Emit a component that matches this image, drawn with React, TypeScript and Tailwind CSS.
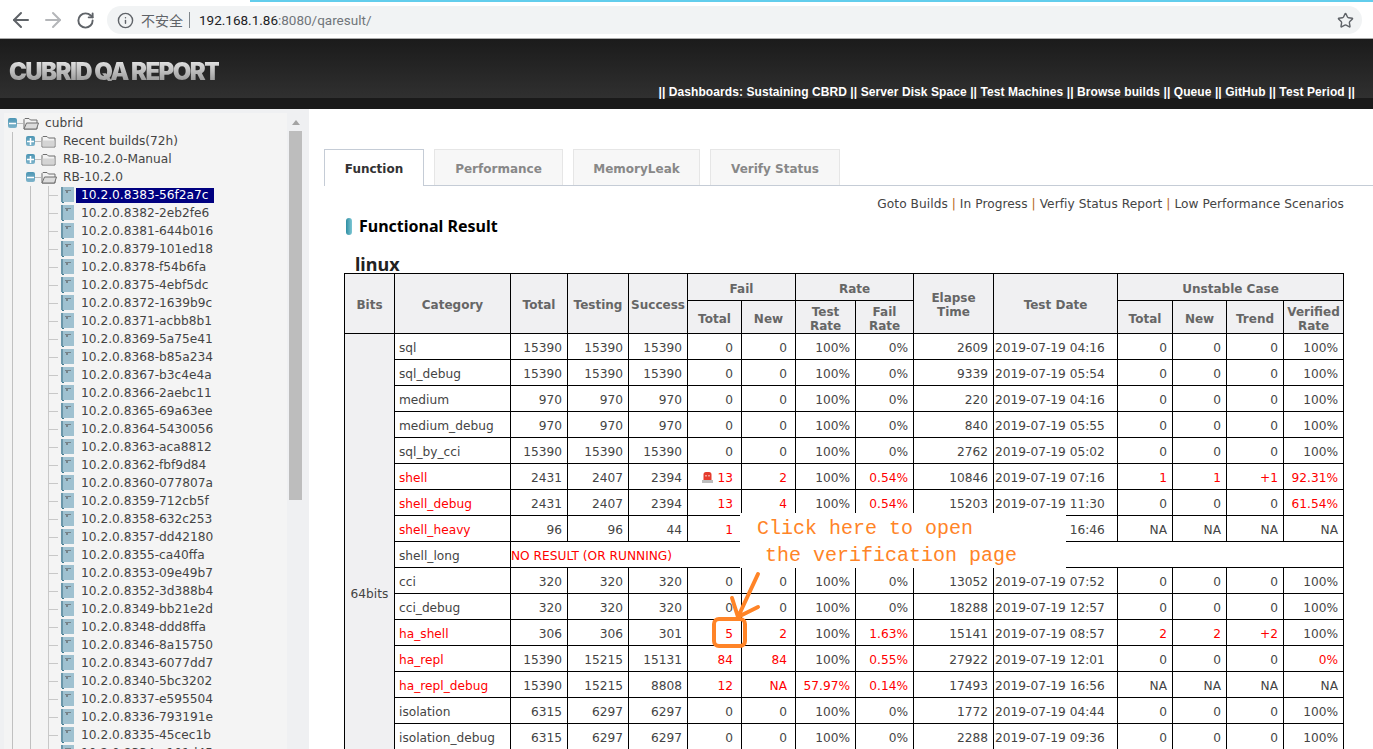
import { ArrowLeft, ArrowRight, Info, RotateCw, Star } from "lucide-react";

const builds = [
  "8382-2eb2fe6", "8381-644b016", "8379-101ed18", "8378-f54b6fa", "8375-4ebf5dc", "8372-1639b9c",
  "8371-acbb8b1", "8369-5a75e41", "8368-b85a234", "8367-b3c4e4a", "8366-2aebc11", "8365-69a63ee",
  "8364-5430056", "8363-aca8812", "8362-fbf9d84", "8360-077807a", "8359-712cb5f", "8358-632c253",
  "8357-dd42180", "8355-ca40ffa", "8353-09e49b7", "8352-3d388b4", "8349-bb21e2d", "8348-ddd8ffa",
  "8346-8a15750", "8343-6077dd7", "8340-5bc3202", "8337-e595504", "8336-793191e", "8335-45cec1b",
  "8334-a101d45",
];

// category, total, testing, success, fail total, fail new, test rate, fail rate, elapse, date, unstable total, new, trend, verified
const rows: string[][] = [
  ["sql", "15390", "15390", "15390", "0", "0", "100%", "0%", "2609", "2019-07-19 04:16", "0", "0", "0", "100%"],
  ["sql_debug", "15390", "15390", "15390", "0", "0", "100%", "0%", "9339", "2019-07-19 05:54", "0", "0", "0", "100%"],
  ["medium", "970", "970", "970", "0", "0", "100%", "0%", "220", "2019-07-19 04:16", "0", "0", "0", "100%"],
  ["medium_debug", "970", "970", "970", "0", "0", "100%", "0%", "840", "2019-07-19 05:55", "0", "0", "0", "100%"],
  ["sql_by_cci", "15390", "15390", "15390", "0", "0", "100%", "0%", "2762", "2019-07-19 05:02", "0", "0", "0", "100%"],
  ["shell", "2431", "2407", "2394", "13", "2", "100%", "0.54%", "10846", "2019-07-19 07:16", "1", "1", "+1", "92.31%"],
  ["shell_debug", "2431", "2407", "2394", "13", "4", "100%", "0.54%", "15203", "2019-07-19 11:30", "0", "0", "0", "61.54%"],
  ["shell_heavy", "96", "96", "44", "1", "", "", "", "", "2019-07-19 16:46", "NA", "NA", "NA", "NA"],
  ["shell_long"],
  ["cci", "320", "320", "320", "0", "0", "100%", "0%", "13052", "2019-07-19 07:52", "0", "0", "0", "100%"],
  ["cci_debug", "320", "320", "320", "0", "0", "100%", "0%", "18288", "2019-07-19 12:57", "0", "0", "0", "100%"],
  ["ha_shell", "306", "306", "301", "5", "2", "100%", "1.63%", "15141", "2019-07-19 08:57", "2", "2", "+2", "100%"],
  ["ha_repl", "15390", "15215", "15131", "84", "84", "100%", "0.55%", "27922", "2019-07-19 12:01", "0", "0", "0", "0%"],
  ["ha_repl_debug", "15390", "15215", "8808", "12", "NA", "57.97%", "0.14%", "17493", "2019-07-19 16:56", "NA", "NA", "NA", "NA"],
  ["isolation", "6315", "6297", "6297", "0", "0", "100%", "0%", "1772", "2019-07-19 04:44", "0", "0", "0", "100%"],
  ["isolation_debug", "6315", "6297", "6297", "0", "0", "100%", "0%", "2288", "2019-07-19 09:36", "0", "0", "0", "100%"],
];

const redCats = ["shell", "shell_debug", "shell_heavy", "ha_shell", "ha_repl", "ha_repl_debug"];
const colWidths = [50, 116, 57, 61, 59, 54, 54, 60, 58, 80, 124, 55, 54, 57, 60];

function isRed(col: number, row: string[]) {
  const v = row[col];
  if (col === 4 || col === 5) return v !== "0";
  if (col === 6) return v !== "100%";
  if (col === 7) return v !== "0%";
  if (col >= 10 && col <= 12) return v !== "0" && v !== "NA";
  if (col === 13) return v !== "100%" && v !== "NA";
  return false;
}

function FolderIcon({ open }: { open?: boolean }) {
  return (
    <svg width="16" height="13" viewBox="0 0 16 13" className="shrink-0">
      <path d="M1 12V2.5L2 1.5H6L7.5 3H14V12Z" fill="#f2f2f2" stroke="#6f6f6f" />
      {open ? (
        <path d="M1 12L3.5 6H15.5L13.5 12Z" fill="#dcdcdc" stroke="#6f6f6f" />
      ) : (
        <path d="M1.5 5.5H13.5V11.5H1.5Z" fill="#d4d4d4" />
      )}
    </svg>
  );
}

function BookIcon() {
  return (
    <svg width="13" height="16" viewBox="0 0 13 16" className="shrink-0">
      <rect x="0" y="0" width="13" height="15" fill="#9fc1d0" />
      <rect x="0" y="0" width="2" height="15" fill="#6b97aa" />
      <rect x="4" y="3" width="6" height="1" fill="#75838a" />
      <rect x="5" y="4" width="2" height="2" fill="#75838a" />
      <rect x="1" y="15" width="2" height="1" fill="#3f7a90" />
    </svg>
  );
}

function Toggle({ plus }: { plus?: boolean }) {
  return (
    <span className="flex h-[10px] w-[9px] shrink-0 items-center justify-center rounded-[2px] bg-gradient-to-b from-[#4d96b4] to-[#7fb4cb]">
      <svg width="7" height="7" viewBox="0 0 7 7">
        <path d={plus ? "M0 3.5H7M3.5 0V7" : "M0 3.5H7"} stroke="#fff" strokeWidth="1.5" />
      </svg>
    </span>
  );
}

function Tree() {
  return (
    <div className="flex h-full w-[283px] flex-col bg-[#f4f4f4] pt-px text-[12.2px] text-[#444]">
      <div className="flex h-[18px] shrink-0 items-center">
        <span className="ml-[4px]"><Toggle /></span>
        <span className="h-px w-[6px] bg-[#bdbdbd]" />
        <FolderIcon open />
        <span className="ml-[6px]">cubrid</span>
      </div>
      {[
        ["Recent builds(72h)", true],
        ["RB-10.2.0-Manual", true],
        ["RB-10.2.0", false],
      ].map(([label, plus]) => (
        <div key={label as string} className="flex h-[18px] shrink-0 items-center">
          <span className="ml-[8px] h-full w-[9px] border-l border-[#c0c0c0]" />
          <span className="ml-[5px]"><Toggle plus={plus as boolean} /></span>
          <span className="h-px w-[6px] bg-[#bdbdbd]" />
          <FolderIcon open={!plus} />
          <span className="ml-[6px]">{label}</span>
        </div>
      ))}
      <Leaf label="8383-56f2a7c" active />
      {builds.map((b) => (
        <Leaf key={b} label={b} />
      ))}
    </div>
  );
}

function Leaf({ label, active }: { label: string; active?: boolean }) {
  return (
    <div className="flex h-[18px] shrink-0 items-center">
      <span className="ml-[8px] h-full w-[18px] border-l border-[#c0c0c0]" />
      <span className="h-full w-[18px] border-l border-[#c0c0c0]" />
      <span className="flex h-full w-[10px] items-center border-l border-[#c8c8c8]">
        <span className="h-px w-full bg-[#c8c8c8]" />
      </span>
      <span className="ml-[3px]"><BookIcon /></span>
      <span
        className={`ml-[2px] flex h-[15px] items-center px-[5px] ${
          active ? "w-[138px] bg-[#000080] text-white" : ""
        }`}
      >
        10.2.0.{label}
      </span>
    </div>
  );
}

function Alarm() {
  return (
    <svg width="11" height="12" viewBox="0 0 11 12" className="mr-[4px] inline-block align-[-1px]">
      <path d="M1.5 9V3.5A2.5 2.5 0 0 1 4 1H7A2.5 2.5 0 0 1 9.5 3.5V9Z" fill="#e53b2d" />
      <rect x="0" y="9" width="11" height="3" fill="#bdbdbd" />
      <rect x="3.5" y="4" width="1" height="1.5" fill="#fff" />
      <rect x="6.5" y="4" width="1" height="1.5" fill="#fff" />
    </svg>
  );
}

function ResultTable() {
  const th = "border border-black bg-[#f0f0f2] p-0 pt-[3px] text-center align-middle text-[12px] font-bold leading-[14px] text-[#666]";
  const td = "border border-black pr-[5px] pt-[3px] text-right";
  return (
    <table className="w-[999px] table-fixed border-collapse text-[12.2px] leading-[15px] text-[#444]">
      <colgroup>
        {colWidths.map((w, i) => (
          <col key={i} style={{ width: w }} />
        ))}
      </colgroup>
      <thead>
        <tr className="h-[27px]">
          <th rowSpan={2} className={th}>Bits</th>
          <th rowSpan={2} className={th}>Category</th>
          <th rowSpan={2} className={th}>Total</th>
          <th rowSpan={2} className={th}>Testing</th>
          <th rowSpan={2} className={th}>Success</th>
          <th colSpan={2} className={th}>Fail</th>
          <th colSpan={2} className={th}>Rate</th>
          <th rowSpan={2} className={th}>Elapse<br />Time</th>
          <th rowSpan={2} className={th}>Test Date</th>
          <th colSpan={4} className={th}>Unstable Case</th>
        </tr>
        <tr className="h-[33px]">
          <th className={th}>Total</th>
          <th className={th}>New</th>
          <th className={th}>Test<br />Rate</th>
          <th className={th}>Fail<br />Rate</th>
          <th className={th}>Total</th>
          <th className={th}>New</th>
          <th className={th}>Trend</th>
          <th className={th}>Verified<br />Rate</th>
        </tr>
      </thead>
      <tbody>
        {rows.map((row, r) => (
          <tr key={row[0]} className="h-[26px]">
            {r === 0 && (
              <td rowSpan={16} className="border border-black bg-[#f0f0f2] pt-[106px] text-center">64bits</td>
            )}
            <td className={`border border-black pl-[4px] pt-[3px] ${redCats.includes(row[0]) ? "text-[#f00]" : ""}`}>{row[0]}</td>
            {row.length === 1 ? (
              <td colSpan={13} className="border border-black pt-[3px] text-[#f00]">NO RESULT (OR RUNNING)</td>
            ) : (
              row.slice(1).map((v, i) => {
                const col = i + 1;
                if (col === 9) {
                  return <td key={col} className="whitespace-nowrap border border-black pl-px pt-[3px]">{v}</td>;
                }
                const pad = col === 4 || col === 5 ? "pr-[8px]" : "";
                return (
                  <td key={col} className={`${td} ${pad} ${isRed(col, row) ? "text-[#f00]" : ""}`}>
                    {row[0] === "shell" && col === 4 && <Alarm />}
                    {v}
                  </td>
                );
              })
            )}
          </tr>
        ))}
      </tbody>
    </table>
  );
}

function Callout() {
  return (
    <>
      <div className="absolute left-[740px] top-[513px] flex h-[55px] w-[326px] flex-col bg-white pt-[2px] font-['Liberation_Mono',monospace] text-[20px] leading-[27px] text-[#ff8427]">
        <span className="whitespace-pre pl-[17px]">Click here to open</span>
        <span className="whitespace-pre pl-[25px]">the verification page</span>
      </div>
      <svg className="pointer-events-none absolute left-[705px] top-[565px]" width="60" height="90" viewBox="705 565 60 90">
        <rect x="714" y="619" width="31" height="27" rx="5" fill="none" stroke="#ff8427" strokeWidth="4" />
        <path d="M758 574L738 617M732 598L738 617L758 607" fill="none" stroke="#ff8427" strokeWidth="4" strokeLinecap="round" />
      </svg>
    </>
  );
}

export default function App() {
  const tabs = ["Performance", "MemoryLeak", "Verify Status"];
  const tabWidths = ["w-[129px]", "w-[127px]", "w-[130px]"];
  const links = ["Goto Builds", "In Progress", "Verfiy Status Report", "Low Performance Scenarios"];
  return (
    <div className="relative flex h-[749px] w-[1373px] flex-col overflow-hidden bg-white font-['DejaVu_Sans',sans-serif]">
      {/* browser chrome */}
      <div className="h-[39px] shrink-0 border-b border-[#a9a9a9] bg-white">
        <div className="ml-[250px] h-[2px] bg-[#62cdec]" />
        <div className="flex h-[36px] items-center pl-[9px] pr-[11px]">
          <ArrowLeft size={24} strokeWidth={2} className="text-[#5f6368]" />
          <ArrowRight size={24} strokeWidth={2} className="ml-[8px] text-[#b4b6b9]" />
          <RotateCw size={19} strokeWidth={2.4} className="ml-[11px] text-[#5f6368]" />
          <div className="ml-[12px] flex h-[28px] flex-1 items-center rounded-full bg-[#f1f3f4] pl-[10px] pr-[8px] font-['Roboto',sans-serif] text-[13.5px]">
            <Info size={17} className="text-[#5f6368]" />
            <span className="ml-[7px] font-['Noto_Sans_CJK_SC',sans-serif] text-[14px] text-[#5f6368]">不安全</span>
            <span className="ml-[6px] h-[16px] w-px bg-[#80868b]" />
            <span className="ml-[9px] text-[#202124]">192.168.1.86<span className="text-[#70757a]">:8080/qaresult/</span></span>
            <Star size={17} className="ml-auto text-[#5f6368]" />
          </div>
        </div>
      </div>

      {/* site header */}
      <div className="h-[70px] shrink-0 bg-[#1a1a1a]">
        <div className="flex h-[59px] items-start justify-between bg-gradient-to-b from-[#1b1b1b] to-[#303030] pl-[9px] pr-[18px]">
          <span className="mt-[19px] bg-gradient-to-b from-[#eeeeee] to-[#8a8a8a] bg-clip-text font-['Inter',sans-serif] text-[24px] font-black leading-[28px] tracking-[-1.6px] text-transparent">
            CUBRID QA REPORT
          </span>
          <span className="mt-[46px] font-['Liberation_Sans',sans-serif] text-[12px] font-bold leading-[14px] tracking-[0.08px] text-white">
            || Dashboards: Sustaining CBRD || Server Disk Space || Test Machines || Browse builds || Queue || GitHub || Test Period ||
          </span>
        </div>
      </div>

      <div className="flex min-h-0 flex-1">
        {/* build tree */}
        <div className="flex w-[309px] shrink-0 bg-[#eff0f2] pl-[4px] pt-[4px]">
          <Tree />
          <div className="w-[22px] pl-[2px]">
            <div className="flex h-[18px] w-[13px] items-center justify-center">
              <span className="h-0 w-0 border-x-[4px] border-b-[5px] border-x-transparent border-b-[#a3a3a3]" />
            </div>
            <div className="h-[369px] w-[13px] bg-[#bdbdbd]" />
          </div>
        </div>

        {/* report */}
        <div className="min-w-0 flex-1 pl-[15px] pt-[40px]">
          <div className="flex h-[37px] gap-[10px] border-b border-[#c5ccd6] text-[12px] font-bold">
            <div className="flex h-[37px] w-[100px] items-center justify-center border border-b-0 border-[#c5ccd6] bg-white pt-[2px] text-[#333]">
              Function
            </div>
            {tabs.map((t, i) => (
              <div key={t} className={`flex h-[36px] items-center justify-center border border-b-0 border-[#e6e6e6] bg-[#f7f7f7] pt-[2px] text-[#888] ${tabWidths[i]}`}>
                {t}
              </div>
            ))}
          </div>
          <div className="ml-[20px] w-[1000px]">
            <div className="mt-[9px] h-[18px] text-right text-[12.2px] leading-[18px] tracking-[0.05px] text-[#444]">
              {links.map((l, i) => (
                <span key={l}>
                  {i > 0 && <span className="text-[#b5651d]"> | </span>}
                  {l}
                </span>
              ))}
            </div>
            <div className="mt-[3px] flex h-[20px] items-center">
              <span className="ml-[2px] h-[17px] w-[6px] rounded-[3px] bg-gradient-to-r from-[#2c8ea3] to-[#7cc7d4]" />
              <span className="ml-[7px] font-['Noto_Sans',sans-serif] text-[16px] font-bold text-black">Functional Result</span>
            </div>
            <div className="ml-[11px] mt-[19px] h-[18px] font-['Noto_Sans',sans-serif] text-[18px] font-bold leading-[19px] text-[#222]">linux</div>
            <ResultTable />
          </div>
        </div>
      </div>

      <Callout />
    </div>
  );
}
